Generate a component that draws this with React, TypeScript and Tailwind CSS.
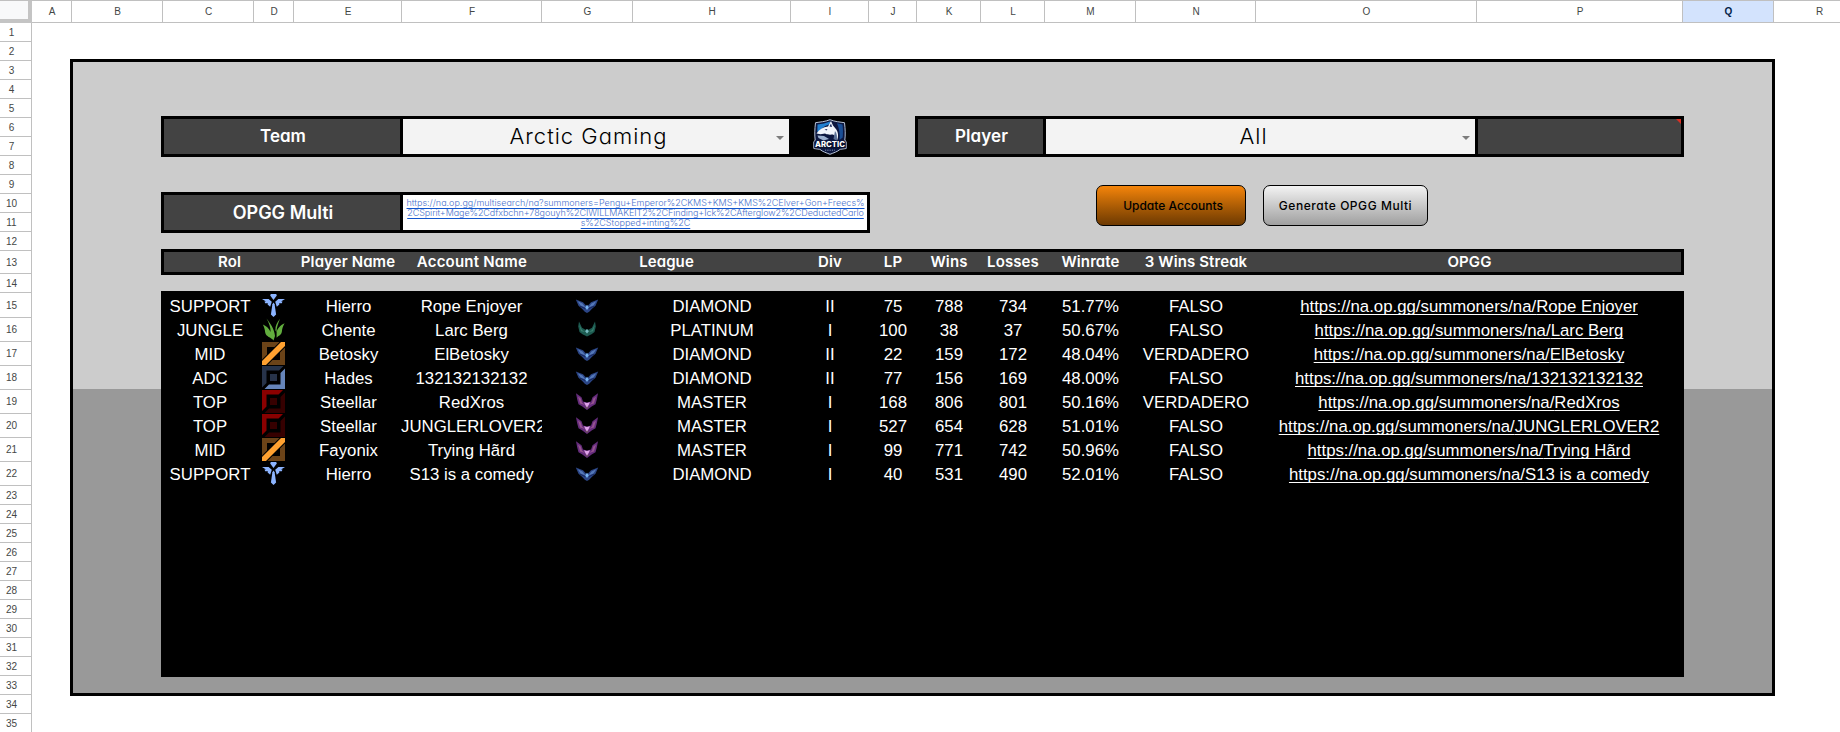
import type { ReactNode } from "react";

const columns: { label: string; width: string; selected?: boolean }[] = [
  { label: "A", width: "w-10" },
  { label: "B", width: "w-[91px]" },
  { label: "C", width: "w-[91px]" },
  { label: "D", width: "w-10" },
  { label: "E", width: "w-[108px]" },
  { label: "F", width: "w-[140px]" },
  { label: "G", width: "w-[91px]" },
  { label: "H", width: "w-[158px]" },
  { label: "I", width: "w-[78px]" },
  { label: "J", width: "w-12" },
  { label: "K", width: "w-16" },
  { label: "L", width: "w-16" },
  { label: "M", width: "w-[91px]" },
  { label: "N", width: "w-[120px]" },
  { label: "O", width: "w-[221px]" },
  { label: "P", width: "w-[206px]" },
  { label: "Q", width: "w-[91px]", selected: true },
  { label: "R", width: "w-[91px]" },
];

const rowNumbers = Array.from({ length: 35 }, (_, i) => i + 1);

function rowHeight(n: number) {
  if (n === 13) return "h-[23px]";
  if (n === 15) return "h-[25px]";
  if (n > 15 && n < 23) return "h-6";
  return "h-[19px]";
}

type Role = "SUPPORT" | "JUNGLE" | "MID" | "ADC" | "TOP";
type League = "DIAMOND" | "PLATINUM" | "MASTER";

interface Account {
  role: Role;
  player: string;
  account: string;
  league: League;
  div: string;
  lp: number;
  wins: number;
  losses: number;
  winrate: string;
  streak: boolean;
}

const accounts: Account[] = [
  { role: "SUPPORT", player: "Hierro", account: "Rope Enjoyer", league: "DIAMOND", div: "II", lp: 75, wins: 788, losses: 734, winrate: "51.77%", streak: false },
  { role: "JUNGLE", player: "Chente", account: "Larc Berg", league: "PLATINUM", div: "I", lp: 100, wins: 38, losses: 37, winrate: "50.67%", streak: false },
  { role: "MID", player: "Betosky", account: "ElBetosky", league: "DIAMOND", div: "II", lp: 22, wins: 159, losses: 172, winrate: "48.04%", streak: true },
  { role: "ADC", player: "Hades", account: "132132132132", league: "DIAMOND", div: "II", lp: 77, wins: 156, losses: 169, winrate: "48.00%", streak: false },
  { role: "TOP", player: "Steellar", account: "RedXros", league: "MASTER", div: "I", lp: 168, wins: 806, losses: 801, winrate: "50.16%", streak: true },
  { role: "TOP", player: "Steellar", account: "JUNGLERLOVER2", league: "MASTER", div: "I", lp: 527, wins: 654, losses: 628, winrate: "51.01%", streak: false },
  { role: "MID", player: "Fayonix", account: "Trying Hãrd", league: "MASTER", div: "I", lp: 99, wins: 771, losses: 742, winrate: "50.96%", streak: false },
  { role: "SUPPORT", player: "Hierro", account: "S13 is a comedy", league: "DIAMOND", div: "I", lp: 40, wins: 531, losses: 490, winrate: "52.01%", streak: false },
];

const tableGrid =
  "grid grid-cols-[91px_40px_108px_140px_91px_158px_78px_48px_64px_64px_91px_120px_427px] text-center whitespace-nowrap";
const display = "font-['Inter',sans-serif] [font-feature-settings:'cv11','ss03']";

function RoleIcon({ role }: { role: Role }) {
  return (
    <svg viewBox="0 0 23 23" className="ml-2 block size-[23px]">
      {role === "SUPPORT" && (
        <g fill="#8cb4ff">
          <path d="M8.8 0h5.4l.6 1.6L11.5 6 8.2 1.6z" />
          <path d="M0 5h6.6l3.2 2.7-1.6 5L5.6 10.6l.3-1.4H3.2L2.5 7.6H4z" />
          <path d="M23 5h-6.600l-3.200 2.700 1.600 5 2.600-2.100-.300-1.400h2.700l.700-1.600H19z" />
          <path d="M11.500 8.400l1.100 1.800 1.500 10.200-2.600 2.600-2.600-2.600 1.500-10.200z" />
        </g>
      )}
      {role === "JUNGLE" && (
        <g fill="#62ad3e">
          <path d="M4.500.500C8 5 12.500 11 13 18l-1.500 4.500C9 19 4 19 3.200 14.500 3 11.500 1.800 8.500.800 6.600 4 7.800 7 10.500 8.600 14 8.700 9 6.800 4.500 4.500.500z" />
          <path d="M18 .800c-3 3.600-4.800 7.200-4.600 11.400l1 2C14.600 9 16.500 4.800 18 .800z" />
          <path d="M22.600 5.200c-3.800 1.600-7.400 5-8 9.300v5.300c2-2.200 4.800-2.300 5.300-6.200.200-3.200 1.200-5.800 2.700-8.400z" />
        </g>
      )}
      {role === "MID" && (
        <>
          <path d="M0 0h23v23H0zM5 5v13h13V5z" fill="#6b4318" fillRule="evenodd" />
          <path d="M8 8h7v7H8z" fill="#0c0804" />
          <path d="M0 17.500L17.500 0H23v5.500L5.500 23H0z" fill="#000" />
          <path d="M0 19L19 0h4v4L4 23H0z" fill="#ffa130" />
        </>
      )}
      {role === "ADC" && (
        <>
          <path d="M0 0h21.500L17 4.500H4.500V17L0 21.500z" fill="#273349" />
          <path d="M23 2.500V23H2.500L7 18.500h11.500V7z" fill="#6685ba" />
          <path d="M8 8h7v7H8z" fill="#273349" />
        </>
      )}
      {role === "TOP" && (
        <>
          <path d="M0 0h21L16.500 4.500h-12v12L0 21z" fill="#8a0000" />
          <path d="M23 2.500V23H2.500L7 18.500h11.500V7z" fill="#360000" />
          <path d="M8 8h7v7H8z" fill="#360000" />
        </>
      )}
    </svg>
  );
}

function Emblem({ league }: { league: League }) {
  if (league === "DIAMOND") {
    return (
      <svg viewBox="0 0 24 24" className="ml-[33px] block size-6">
        <path d="M.800 5.500L8 8.300l3 3.200 1 .5 1-.5 3-3.200 7.200-2.800-2.700 6.300-3.500 3-2.800 3L12 19l-2.200-1.200-2.800-3-3.500-3z" fill="#2b4585" />
        <path d="M2.800 7.200l4.700 2.200 3 4-5-1.800zM21.200 7.200l-4.700 2.200-3 4 5-1.800z" fill="#5478b8" />
        <path d="M5 12.200l5 2.300M19 12.200l-5 2.300" stroke="#16265e" strokeWidth="1" />
        <path d="M12 10.800l1.800 2.500L12 16l-1.800-2.700z" fill="#78b4f4" />
      </svg>
    );
  }
  if (league === "PLATINUM") {
    return (
      <svg viewBox="0 0 24 24" className="ml-[33px] block size-6">
        <path d="M4 3.500l3 6.300 3.500 2 1.500-.6 1.500.6 3.500-2 3-6.300.8 5-1.300 5.600-3 2.200L12 18.500l-4.500-2.200-3-2.200L3.200 8.500z" fill="#1d5a50" />
        <path d="M4.300 7l2.700 5 3 2-4-.8zM19.700 7L17 12l-3 2 4-.8z" fill="#39806f" />
        <path d="M12 11l1.900 2.200L12 15.600l-1.900-2.400z" fill="#79bcc2" />
      </svg>
    );
  }
  return (
    <svg viewBox="0 0 24 24" className="ml-[33px] block size-6">
      <path d="M1 3.200l5.500 4L8 11.500l4 1 4-1 1.500-4.300 5.500-4-1.200 6.300-1.300 4.800-3.500 2L12 20l-5-3.700-3.500-2L2.200 9.500z" fill="#652c7c" />
      <path d="M3 6.500l2.700 2 1.400 4.300 3 2.200-5-1.500zM21 6.500l-2.700 2-1.400 4.300-3 2.200 5-1.500z" fill="#96538f" />
      <path d="M10 16.500l2 2.500 2-2.500z" fill="#6a5058" />
      <path d="M9 12.300l3 .8 3-.8-1.600 3.200L12 17.500l-1.400-2z" fill="#e0a2ea" />
    </svg>
  );
}

function TeamLogo() {
  return (
    <svg viewBox="0 0 34 36" className="h-9 w-[34px]">
      <path d="M17 .700C12 2.700 7 3 2.500 3.700 1.700 10 1.500 16 2.200 21L.800 23v6.500l6 .8c3 2.500 6.500 3.500 10.200 5 3.700-1.500 7.200-2.500 10.200-5l6-.8V23l-1.400-2c.7-5 .5-11-.3-17.300C27 3 22 2.700 17 .700z" fill="#0c1740" stroke="#b7c3d6" strokeWidth="1" />
      <path d="M4.500 5.500C9 5 13 4 17 2.500l2 2.800c-5 .2-9 2.400-12 6.200L4.300 13z" fill="#1f7fd0" />
      <path d="M24 4.200l5.500 1.300c.6 4.500.6 9 .2 13L26.500 21c.8-6-.5-12-2.500-16.800z" fill="#1a4f96" />
      <path d="M3.500 14.500C6 10.500 10 8 15 7.500L18 2l2 4.500 2.500 3c3 3.500 3.200 8 1.500 12-.6-3-1.800-5-4-6-3.500.3-6 .2-8-1l-4.500.8z" fill="#f1f5fb" />
      <path d="M16.500 7.500L18 4.500l1 3.500zM11.500 10.500l3-.5-1 1.500z" fill="#14265e" />
      <path d="M4.500 16.500l6.500.4 5 3.100-5.500 1.500-5-2.500z" fill="#9bb0cf" />
      <path d="M22 12c2 2.500 2.500 6 1.500 9.500l-3-1.500z" fill="#5a7096" />
      <path d="M1.500 22.500h31v6.700h-31z" fill="#0a1130" />
      <text x="17" y="28.300" textAnchor="middle" textLength="30" lengthAdjust="spacingAndGlyphs" fill="#fff" className="font-['Inter',sans-serif] text-[7.500px] font-extrabold">
        ARCTIC
      </text>
      <path d="M12 31.200h10" stroke="#8ea2c4" strokeWidth=".9" strokeDasharray="1.200 1.100" />
    </svg>
  );
}

function Caret() {
  return (
    <svg viewBox="0 0 8 4" className="absolute top-[17px] right-[5px] h-1 w-2">
      <path d="M0 0h8L4 4z" fill="#7c7c7c" />
    </svg>
  );
}

function Label({ children, className }: { children: ReactNode; className: string }) {
  return (
    <div className={`${display} flex shrink-0 items-center justify-center border-r-[3px] border-black bg-[#434343] pl-0.5 font-semibold text-white ${className}`}>
      {children}
    </div>
  );
}

function Cell({ children, className = "" }: { children: ReactNode; className?: string }) {
  return <div className={`h-6 overflow-hidden ${className}`}>{children}</div>;
}

function ColumnHeaders() {
  return (
    <div className="flex h-[23px] shrink-0 border-t border-[#c0c0c0]">
      <div className="h-[22px] w-8 shrink-0 border-r-4 border-b-4 border-[#c4c4c4] bg-[#f8f9fa]" />
      {columns.map((c) => (
        <div
          key={c.label}
          className={`${c.width} flex shrink-0 items-center justify-center border-r border-b border-[#c0c0c0] pl-px text-[10px] ${
            c.selected ? "bg-[#d3e3fd] font-bold text-[#041e49]" : "text-[#444746]"
          }`}
        >
          {c.label}
        </div>
      ))}
    </div>
  );
}

function RowHeaders() {
  return (
    <div className="w-8 shrink-0 border-r border-[#c0c0c0]">
      {rowNumbers.map((n) => (
        <div
          key={n}
          className={`${rowHeight(n)} flex items-center justify-center border-b border-[#c0c0c0] pr-2 text-[10px] text-[#444746]`}
        >
          {n}
        </div>
      ))}
    </div>
  );
}

function Filters() {
  return (
    <div className="flex h-[41px] justify-between">
      <div className="flex w-[709px] border-[3px] border-black bg-black">
        <Label className="w-[239px] text-[17px]">Team</Label>
        <div className={`${display} relative flex w-[386px] items-center justify-center bg-[#f3f3f3] pr-[15px] text-[22px] font-light tracking-[1px] text-black`}>
          Arctic Gaming
          <Caret />
        </div>
        <div className="flex flex-1 items-center justify-center pl-1">
          <TeamLogo />
        </div>
      </div>
      <div className="flex w-[769px] border-[3px] border-black">
        <Label className="w-32 text-[17px] tracking-[0.100px]">Player</Label>
        <div className={`${display} relative flex w-[429px] items-center justify-center bg-[#f3f3f3] pr-[14px] text-[22px] font-light tracking-[1px] text-black`}>
          All
          <Caret />
        </div>
        <div className="relative flex-1 border-l-[3px] border-black bg-[#434343]">
          <svg viewBox="0 0 5 5" className="absolute top-0 right-0 size-[5px]">
            <path d="M0 0h5v5z" fill="#d93025" />
          </svg>
        </div>
      </div>
    </div>
  );
}

function MultiSearch() {
  return (
    <div className="mt-7 flex h-12 items-start">
      <div className="mt-[7px] flex h-[41px] w-[709px] border-[3px] border-black">
        <Label className="w-[239px] text-lg">OPGG Multi</Label>
        <a className={`${display} block flex-1 bg-white pt-[3px] pl-px text-center text-[9px] leading-[10px] font-light whitespace-nowrap text-[#4a72cc] underline decoration-[#1155cc] decoration-1 underline-offset-[1.500px] [text-decoration-skip-ink:none]`}>
          <span className="block">https://na.op.gg/multisearch/na?summoners=Pengu+Emperor%2CKMS+KMS+KMS%2CElver+Gon+Freecs%</span>
          <span className="block tracking-[-0.070px]">2CSpirit+Mage%2Cdfxbchn+78gouyh%2CIWILLMAKEIT2%2CFinding+Ick%2CAfterglow2%2CDeductedCarlo</span>
          <span className="block">s%2CStopped+inting%2C</span>
        </a>
      </div>
      <button className={`${display} ml-[226px] h-[41px] w-[150px] rounded-[7px] border border-black bg-linear-to-b from-[#f5850b] to-[#6e3a02] pl-1 text-xs font-medium text-black`}>
        Update Accounts
      </button>
      <button className={`${display} ml-[17px] h-[41px] w-[165px] rounded-[7px] border border-black bg-linear-to-b from-[#f3f3f3] to-[#a0a0a0] text-xs font-medium tracking-[0.550px] text-black`}>
        Generate OPGG Multi
      </button>
    </div>
  );
}

function TableHeader() {
  return (
    <div className={`${tableGrid} ${display} mt-4 h-[26px] border-[3px] border-black bg-[#434343] text-[15px] leading-5 font-semibold tracking-[0.100px] text-white`}>
      <div className="col-span-2">Rol</div>
      <div className="-ml-0.5">Player Name</div>
      <div className="-ml-0.5 tracking-[0.200px]">Account Name</div>
      <div className="col-span-2 -ml-0.5">League</div>
      <div className="-ml-0.5">Div</div>
      <div className="-ml-0.5">LP</div>
      <div className="-ml-0.5">Wins</div>
      <div className="-ml-0.5">Losses</div>
      <div className="-ml-0.5">Winrate</div>
      <div className="-ml-0.5">3 Wins Streak</div>
      <div className="-ml-0.5">OPGG</div>
    </div>
  );
}

function AccountTable() {
  return (
    <div className="mt-4 h-[386px] bg-black pt-[3px] pl-0.5 text-[16.800px] leading-[26px] text-white">
      {accounts.map((a, i) => (
        <div key={i} className={`${tableGrid} h-6`}>
          <Cell className="pl-[3px]">{a.role}</Cell>
          <Cell>
            <RoleIcon role={a.role} />
          </Cell>
          <Cell className="pl-px">{a.player}</Cell>
          <Cell className="-ml-px">{a.account}</Cell>
          <Cell>
            <Emblem league={a.league} />
          </Cell>
          <Cell>{a.league}</Cell>
          <Cell>{a.div}</Cell>
          <Cell>{a.lp}</Cell>
          <Cell>{a.wins}</Cell>
          <Cell>{a.losses}</Cell>
          <Cell>{a.winrate}</Cell>
          <Cell>{a.streak ? "VERDADERO" : "FALSO"}</Cell>
          <Cell className="-ml-px">
            <a className="underline decoration-1 underline-offset-2 [text-decoration-skip-ink:none]">
              https://na.op.gg/summoners/na/{a.account}
            </a>
          </Cell>
        </div>
      ))}
    </div>
  );
}

export default function App() {
  return (
    <div className="flex h-[732px] w-[1840px] flex-col overflow-hidden bg-white font-['Liberation_Sans',Arial,sans-serif]">
      <ColumnHeaders />
      <div className="flex">
        <RowHeaders />
        <main className="pt-9 pl-[38px]">
          <section className="h-[637px] w-[1705px] border-[3px] border-black bg-[linear-gradient(#cccccc_327px,#999999_327px)] pt-[54px] pr-[88px] pl-[88px]">
            <Filters />
            <MultiSearch />
            <TableHeader />
            <AccountTable />
          </section>
        </main>
      </div>
    </div>
  );
}
